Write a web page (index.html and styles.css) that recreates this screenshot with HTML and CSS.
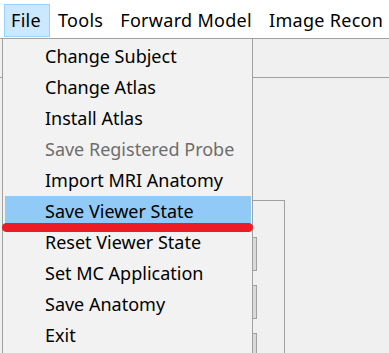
FILE: index.html
```html
<!DOCTYPE html>
<html lang="en">
<head>
  <meta charset="UTF-8">
  <meta name="viewport" content="width=device-width, initial-scale=1.0">
  <title>Menu</title>
  <link rel="stylesheet" href="styles.css">
</head>
<body>
  <div class="menubar">
    <span class="top-item open">File</span>
    <span class="top-item">Tools</span>
    <span class="top-item">Forward Model</span>
    <span class="top-item">Image Recon</span>
  </div>

  <div class="workspace">
    <div class="toolbar"></div>
    <div class="panels">
      <div class="left-pane"></div>
      <div class="side-box">
        <div class="tab"></div>
        <div class="tab"></div>
        <div class="tab"></div>
      </div>
    </div>

    <!-- dropdown from the File menu -->
    <ul class="dropdown">
      <li>Change Subject</li>
      <li>Change Atlas</li>
      <li>Install Atlas</li>
      <li class="disabled">Save Registered Probe</li>
      <li>Import MRI Anatomy</li>
      <li class="hover">Save Viewer State</li>
      <li>Reset Viewer State</li>
      <li>Set MC Application</li>
      <li>Save Anatomy</li>
      <li>Exit</li>
    </ul>
    <div class="red-mark"></div>
  </div>
</body>
</html>
```

FILE: styles.css
```css
html, body {
  margin: 0;
  height: 100%;
  overflow: hidden;
}
body {
  font-family: "Noto Sans", "Open Sans", sans-serif;
  font-size: 18px;
  color: #000;
  background: #f0f0f0;
  display: flex;
  flex-direction: column;
}
.menubar {
  display: flex;
  flex: none;
  height: 39px;
  padding-left: 4px;
  background: #fff;
  border-bottom: 1px solid #a0a0a0;
  box-sizing: border-box;
  align-items: flex-start;
  letter-spacing: 0.3px;
  overflow: hidden;
}
.top-item {
  flex: none;
  white-space: nowrap;
  height: 33px;
  margin-top: 4px;
  line-height: 31px;
  padding: 0 8px 0 6px;
  border: 1px solid transparent;
  box-sizing: border-box;
  margin-right: 1px;
}
.top-item.open {
  background: #cce8ff;
  border-color: #99d1ff;
}
.workspace {
  position: relative;
  flex: 1;
  min-height: 0;
  display: flex;
  flex-direction: column;
}
.toolbar {
  flex: none;
  height: 38px;
  border-bottom: 1px solid #a0a0a0;
}
.panels {
  display: flex;
  flex: 1;
  min-height: 0;
}
.left-pane {
  width: 252px;
  border-right: 1px solid #a0a0a0;
}
.side-box {
  width: 31px;
  margin-top: 122px;
  border-top: 1px solid #a0a0a0;
  border-right: 1px solid #a0a0a0;
  padding-top: 36px;
  display: flex;
  flex-direction: column;
  gap: 14px;
}
.tab {
  flex: none;
  width: 3px;
  height: 32px;
  background: #dadada;
  border: 1px solid #a0a0a0;
  border-left: none;
}
.dropdown {
  position: absolute;
  left: 2px;
  top: -1px;
  bottom: 0;
  width: 249px;
  margin: 0;
  padding: 2px 0 0;
  list-style: none;
  background: #f2f2f2;
  border: 1px solid #a0a0a0;
  border-bottom: none;
}
.dropdown li {
  height: 31px;
  line-height: 31px;
  margin: 0 1px 0 2px;
  padding-left: 40px;
  white-space: nowrap;
}
.dropdown li.disabled {
  color: #6d6d6d;
}
.dropdown li.hover {
  background: #91c9f7;
}
.red-mark {
  position: absolute;
  left: 2px;
  top: 184px;
  width: 251px;
  height: 9px;
  border-radius: 5px;
  background: #ed1c24;
}
```
